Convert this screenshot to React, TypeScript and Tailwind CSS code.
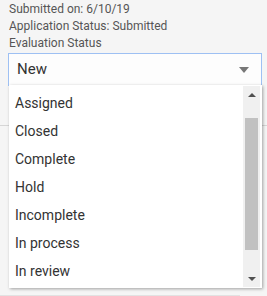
import React from "react";

const options = [
  "Assigned",
  "Closed",
  "Complete",
  "Hold",
  "Incomplete",
  "In process",
  "In review",
];

export default function App() {
  return (
    <div className="relative w-[267px] h-[296px] overflow-hidden bg-[#f5f5f5] font-['Roboto',sans-serif]">
      {/* Details */}
      <div className="px-[9px] pt-[1px] text-[12px] leading-[17px] text-[#555]">
        <p>Submitted on: 6/10/19</p>
        <p>Application Status: Submitted</p>
        <p>Evaluation Status</p>
      </div>

      {/* Select */}
      <div className="ml-[8px] w-[254px] mt-[1px] h-[33px] flex items-center justify-between border border-[#9ec0f3] bg-[#fdfdfd] pl-[8px] pr-[12px]">
        <span className="text-[15px] text-[#333]">New</span>
        <span className="w-0 h-0 border-l-[5px] border-r-[5px] border-t-[6px] border-l-transparent border-r-transparent border-t-[#777]" />
      </div>

      {/* Background rows */}
      <div className="mt-[39px] border-t border-[#d6d6d6]" />
      <div className="mt-[169px] w-[240px] border-t border-[#e2e2e2]" />

      {/* Dropdown list */}
      <div className="absolute left-[9px] top-[85px] w-[253px] h-[203px] flex bg-white shadow-[1px_1px_3px_rgba(0,0,0,0.35)]">
        <ul className="flex-1 pt-[4px]">
          {options.map((o) => (
            <li key={o} className="h-[28px] flex items-center px-[6px] text-[14px] text-[#333]">
              {o}
            </li>
          ))}
        </ul>
        <div className="w-[17px] mr-[2px] my-[1px] bg-[#f0f0f0] flex flex-col items-center">
          <div className="h-[17px] flex items-center justify-center">
            <span className="w-0 h-0 border-l-[4px] border-r-[4px] border-b-[4px] border-l-transparent border-r-transparent border-b-[#505050]" />
          </div>
          <div className="mt-[15px] w-[13px] h-[132px] bg-[#c1c1c1]" />
          <div className="flex-1" />
          <div className="h-[17px] flex items-center justify-center">
            <span className="w-0 h-0 border-l-[4px] border-r-[4px] border-t-[4px] border-l-transparent border-r-transparent border-t-[#505050]" />
          </div>
        </div>
      </div>
    </div>
  );
}
